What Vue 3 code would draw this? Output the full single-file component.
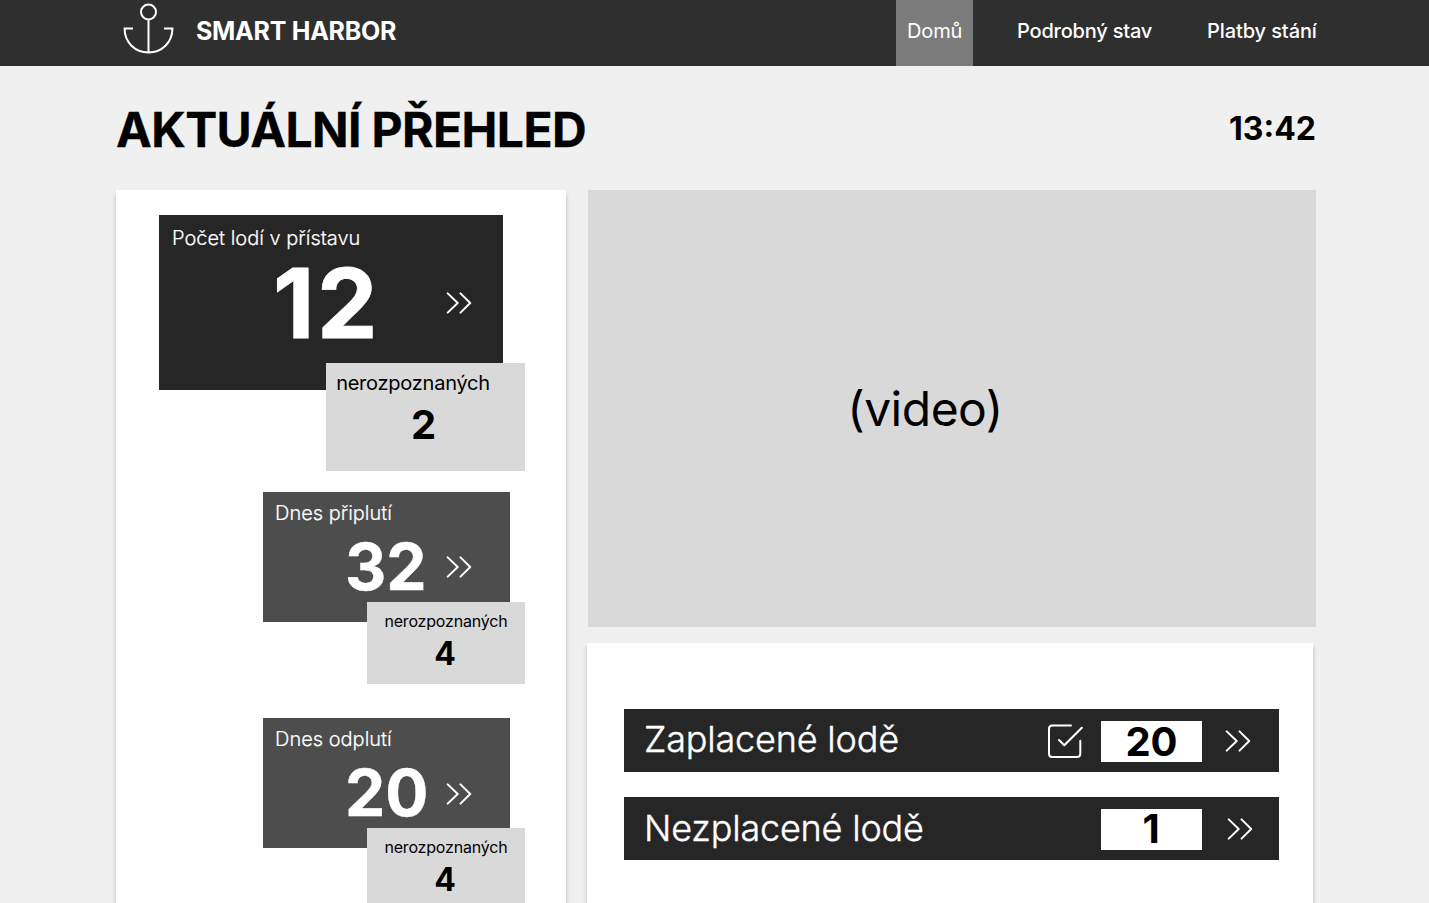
<script setup>
const nav = [
  { label: 'Domů', key: 'home', active: true },
  { label: 'Podrobný stav', key: 'detail' },
  { label: 'Platby stání', key: 'payments' },
]
const stats = [
  { key: 'total', label: 'Počet lodí v přístavu', value: 12, unknown: 2 },
  { key: 'arrived', label: 'Dnes připlutí', value: 32, unknown: 4 },
  { key: 'departed', label: 'Dnes odplutí', value: 20, unknown: 4 },
]
const payments = [
  { key: 'paid', label: 'Zaplacené lodě', value: 20, check: true },
  { key: 'unpaid', label: 'Nezplacené lodě', value: 1 },
]
</script>

<template>
  <div class="page">
    <header class="topbar">
      <svg class="anchor" viewBox="0 0 52 52" fill="none" stroke="#fff" stroke-width="2">
        <circle cx="25.5" cy="9" r="7.5" />
        <path d="M25.5 16.5V49.5M10 25.6H1.6C1.6 39.5 12 49.4 25.5 49.4S49.4 39.5 49.4 25.6H41" />
      </svg>
      <span class="brand">SMART HARBOR</span>
      <nav class="nav">
        <a v-for="n in nav" :key="n.key" :class="['link', n.key, { active: n.active }]">{{ n.label }}</a>
      </nav>
    </header>

    <div class="heading">
      <h1>AKTUÁLNÍ PŘEHLED</h1>
      <time>13:42</time>
    </div>

    <main class="content">
      <section class="panel stats">
        <article v-for="s in stats" :key="s.key" :class="['stat', s.key]">
          <p class="label">{{ s.label }}</p>
          <div class="figure">
            <strong>{{ s.value }}</strong>
            <svg class="chevrons" viewBox="0 0 26 22"><path d="M1.7 1.4L11.7 11L1.7 20.6M14.5 1.4L24.2 11L14.5 20.6" /></svg>
          </div>
          <div class="unknown">
            <p>nerozpoznaných</p>
            <b>{{ s.unknown }}</b>
          </div>
        </article>
      </section>

      <div class="side">
        <section class="video"><span>(video)</span></section>
        <section class="panel payments">
          <div v-for="p in payments" :key="p.key" :class="['row', p.key]">
            <span class="name">{{ p.label }}</span>
            <svg v-if="p.check" class="check" viewBox="0 0 36 35">
              <path d="M24 1.5H5Q2 1.5 2 5V29.5Q2 33 5 33H29.8Q33.3 33 33.3 29.5V16.8M12 16L17.3 21.3L34.8 3.8" />
            </svg>
            <span class="amount"><b>{{ p.value }}</b></span>
            <svg class="chevrons" viewBox="0 0 26 22"><path d="M1.7 1.4L11.7 11L1.7 20.6M14.5 1.4L24.2 11L14.5 20.6" /></svg>
          </div>
        </section>
      </div>
    </main>
  </div>
</template>

<style>
body { margin: 0; background: #f0f0f0; }
</style>

<style scoped>
.page {
  width: 1429px;
  height: 903px;
  overflow: hidden;
  background: #f0f0f0;
  color: #000;
  font-family: Inter, "Liberation Sans", sans-serif;
}
p, h1 { margin: 0; }
.topbar {
  display: flex;
  height: 66px;
  padding-left: 123px;
  background: #2f2f2f;
  color: #fff;
}
.anchor { width: 52px; height: 52px; margin-top: 3px; }
.brand { margin-left: 21px; font-size: 25px; font-weight: 700; line-height: 62px; letter-spacing: -0.27px; white-space: nowrap; }
.nav { display: flex; margin-left: auto; font-size: 20px; font-weight: 500; line-height: 62px; letter-spacing: -0.14px; white-space: nowrap; }
.link { box-sizing: border-box; height: 66px; }
.home { width: 77px; padding-left: 11px; }
.detail { width: 190px; padding-left: 44px; letter-spacing: -0.2px; }
.payments.link { width: 266px; padding-left: 44px; letter-spacing: -0.1px; }
.active { background: #7b7b7b; font-weight: 400; }
.heading {
  display: flex;
  justify-content: space-between;
  height: 124px;
  padding: 0 113px 0 116px;
}
h1 { font-size: 48px; font-weight: 700; line-height: 127px; letter-spacing: -0.6px; white-space: nowrap; -webkit-text-stroke: 0.3px; }
time { font-size: 32px; font-weight: 700; line-height: 125px; }
.content { display: flex; align-items: flex-start; padding-left: 116px; }
.panel { box-sizing: border-box; background: #fff; box-shadow: 0 4px 4px rgba(0, 0, 0, 0.25); }
.stats { width: 450px; height: 760px; padding-top: 25px; }
.stat { position: relative; box-sizing: border-box; width: 247px; height: 130px; margin: 0 0 96px 147px; background: #4d4d4d; color: #fff; }
.label { padding: 6px 0 0 12px; font-size: 20px; font-weight: 300; line-height: 30px; white-space: nowrap; -webkit-text-stroke: 0.2px; }
.figure { display: flex; align-items: center; height: 78px; }
.figure strong { width: 79px; margin-left: 82px; font-size: 64px; line-height: 78px; text-align: center; -webkit-text-stroke: 0.4px; }
.figure .chevrons { margin-left: 22px; }
.chevrons { flex: none; width: 26px; height: 22px; }
.chevrons path, .check path { fill: none; stroke: #fff; stroke-width: 2; stroke-linecap: round; stroke-linejoin: round; }
.total { width: 344px; height: 175px; margin: 0 0 102px 43px; background: #262626; }
.total .label { padding: 8px 0 0 13px; }
.total .figure { height: 100px; }
.total strong { width: 104px; margin-left: 114px; font-size: 96px; line-height: 100px; letter-spacing: 2.5px; -webkit-text-stroke: 0.8px; }
.total .figure .chevrons { margin-left: 69px; }
.unknown {
  position: absolute;
  top: 110px;
  right: -15px;
  width: 158px;
  height: 82px;
  background: #d9d9d9;
  color: #000;
  text-align: center;
}
.unknown p { padding-top: 9px; font-size: 16px; font-weight: 400; line-height: 21px; letter-spacing: -0.18px; }
.unknown b { display: block; margin-top: 2px; padding-right: 2px; font-size: 32px; line-height: 40px; }
.total .unknown { top: 148px; right: -22px; width: 199px; height: 108px; }
.total .unknown p { padding: 5px 25px 0 0; font-size: 20px; line-height: 30px; letter-spacing: -0.24px; }
.total .unknown b { margin-top: 2px; padding-right: 4px; font-size: 40px; line-height: 50px; }
.side { margin-left: 21px; }
.video {
  box-sizing: border-box;
  display: flex;
  align-items: center;
  justify-content: center;
  width: 728px;
  height: 437px;
  margin-left: 1px;
  padding-right: 54px;
  background: #d9d9d9;
  font-size: 48px;
  font-weight: 400;
  letter-spacing: -0.5px;
}
.payments.panel { width: 726px; height: 330px; margin-top: 16px; padding: 66px 0 0 37px; }
.row { display: flex; align-items: center; width: 655px; height: 63px; margin-bottom: 25px; background: #262626; color: #fff; }
.name { flex: 1; padding-left: 20px; font-size: 36px; font-weight: 300; line-height: 60px; height: 63px; letter-spacing: -0.18px; white-space: nowrap; -webkit-text-stroke: 0.4px; }
.check { width: 36px; height: 35px; margin-top: 2px; margin-right: 18px; }
.amount { width: 101px; height: 41px; margin-top: 2px; margin-right: 23px; background: #fff; color: #000; font-size: 40px; line-height: 41px; text-align: center; }
.row .chevrons { margin-right: 28px; }
.unpaid .name { line-height: 62px; }
.unpaid .amount { box-sizing: border-box; margin-right: 25px; padding-right: 1px; line-height: 39px; }
.unpaid .chevrons { margin-right: 26px; }
.departed .chevrons { margin-top: 2px; }
</style>
